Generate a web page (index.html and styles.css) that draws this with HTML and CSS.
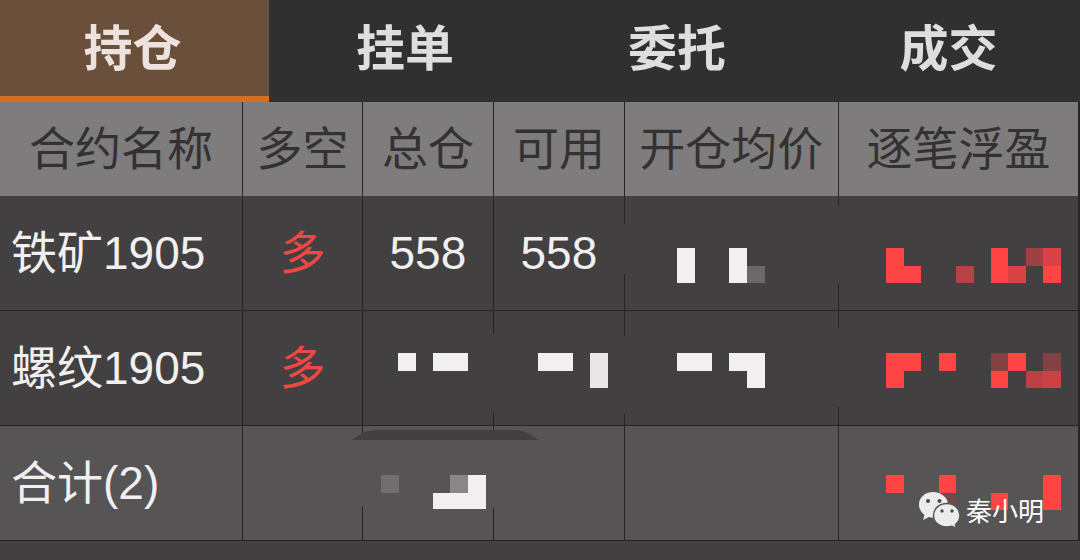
FILE: index.html
```html
<!DOCTYPE html>
<html lang="zh-CN">
<head>
<meta charset="utf-8">
<title>持仓</title>
<link rel="stylesheet" href="styles.css">
</head>
<body>
<nav class="tabs">
  <button class="tab tab-active" type="button">持仓</button>
  <button class="tab" type="button">挂单</button>
  <button class="tab" type="button">委托</button>
  <button class="tab tab-last" type="button">成交</button>
</nav>
<main class="board">
  <table class="positions">
    <colgroup>
      <col class="col-name"><col class="col-side"><col class="col-qty"><col class="col-qty"><col class="col-price"><col class="col-profit">
    </colgroup>
    <thead>
      <tr><th>合约名称</th><th>多空</th><th>总仓</th><th>可用</th><th>开仓均价</th><th>逐笔浮盈</th></tr>
    </thead>
    <tbody>
      <tr><td class="name">铁矿1905</td><td class="side">多</td><td>558</td><td>558</td><td></td><td></td></tr>
      <tr><td class="name">螺纹1905</td><td class="side">多</td><td></td><td></td><td></td><td></td></tr>
    </tbody>
    <tfoot>
      <tr><td class="name">合计(2)</td><td></td><td></td><td></td><td></td><td></td></tr>
    </tfoot>
  </table>
  <svg class="mosaic" viewBox="0 102 1080 439" preserveAspectRatio="none" aria-hidden="true">
    <!-- smudged stretches of the grid lines -->
    <g fill="#424041">
      <path d="M620 224h8v50h-8zM620 336h8v78h-8zM834 206h8v78h-8zM834 328h8v79h-8zM489 334h8v78h-8z"/>
    </g>
    <path fill="#565455" d="M358 433h8v73h-8zM489 436h8v72h-8z"/>
    <path fill="#424041" d="M352 440C358 436 364 430 377 430H515C526 430 532 436 539 440Z"/>
    <g fill="#f1eff0">
      <path d="M677 248h18v35h-18zM729 248h18v35h-18z"/>
      <path d="M398 353h18v18h-18zM433 353h35v18h-35zM538 353h35v18h-35z"/>
      <path d="M677 353h35v18h-35zM729 353h36v35h-18v-17h-18z"/>
      <path d="M468 475h18v34h-53v-16h35z"/>
    </g>
    <path fill="#e8e6e7" d="M590 353h18v35h-18z"/>
    <path fill="#6a6869" d="M747 266h18v17h-18z"/>
    <path fill="#706e6f" d="M381 475h18v18h-18z"/>
    <path fill="#888687" d="M450 475h18v18h-18z"/>
    <g fill="#ff4444">
      <path d="M886 248h18v18h17v17h-35zM991 248h17v35h-17zM1043 266h18v17h-18z"/>
      <path d="M886 353h35v18h-17v17h-18zM939 353h17v18h-17zM1008 353h18v18h-18zM991 371h17v17h-17z"/>
      <path d="M886 475h18v18h-18zM939 475h17v18h-17zM991 493h17v17h-17zM1043 475h18v35h-18z"/>
    </g>
    <path fill="#b74144" d="M956 266h18v17h-18z"/>
    <path fill="#d94345" d="M1008 266h18v17h-18zM1043 248h18v18h-18z"/>
    <path fill="#9f4044" d="M1026 248h17v18h-17z"/>
    <path fill="#834144" d="M991 353h17v18h-17zM1043 353h18v18h-18z"/>
    <path fill="#bd4144" d="M1026 371h17v17h-17z"/>
    <path fill="#cc4144" d="M1043 371h18v17h-18z"/>
    <path fill="#74494b" d="M939 493h17v17h-17z"/>
  </svg>
  <div class="signature">
    <svg class="wechat" viewBox="0 0 42 38" aria-hidden="true">
      <path fill="#ececee" d="M15 1C7 1 1 6.500 1 13.500C1 18 3.500 21.500 6.500 24L5 29L11 26C12.500 26.500 14 26.700 16 26.700C24 26.700 30 21 30 13.500C30 6.500 23 1 15 1Z"/>
      <path fill="#ececee" stroke="#565455" stroke-width="1.500" d="M29 12.500C21.500 12.500 15.500 17.500 15.500 24.500C15.500 31.500 21.500 36 29 36C31 36 32.500 35.700 34 35.200L38.500 37.500L37.500 33.500C40 31.500 42 28.500 42 24.500C42 17.500 36 12.500 29 12.500Z"/>
      <g fill="#4b494a"><circle cx="10" cy="10" r="2"/><circle cx="21.500" cy="10" r="2"/><circle cx="24" cy="20" r="1.700"/><circle cx="34" cy="20" r="1.700"/></g>
    </svg>
    <span>秦小明</span>
  </div>
</main>
</body>
</html>
```
FILE: styles.css
```css
* { box-sizing: border-box; }

body {
  margin: 0;
  min-height: 100vh;
  background: #424041;
  color: #f1eff0;
  font-family: "Liberation Sans", "Noto Sans CJK SC", sans-serif;
}

.tabs {
  display: grid;
  grid-template-columns: 269fr 272fr 272fr 267fr;
  height: 102px;
  background: #303030;
}

.tab {
  border: 0;
  padding: 0 0 12px;
  background: none;
  color: #dedede;
  font: 700 49px/72px "Noto Sans CJK SC", sans-serif;
}

.tab-active {
  background: #6a503a;
  border-bottom: 6px solid #d66e20;
  padding: 0 4px 6px 0;
  color: #eee2df;
}

.tab-last { padding-left: 4px; }

.board { position: relative; }

.positions {
  width: 100%;
  table-layout: fixed;
  border-collapse: separate;
  border-spacing: 0;
  font-size: 46px;
  line-height: 60px;
}

.col-name { width: 22.500%; }
.col-side { width: 11.100%; }
.col-qty { width: 12.130%; }
.col-price { width: 19.810%; }

.positions th,
.positions td {
  padding: 0;
  border-right: 1px solid #262425;
  text-align: center;
  font-weight: 400;
  white-space: nowrap;
}

.positions th {
  height: 94px;
  background: #7e7c7d;
  color: #333132;
}

.positions td {
  height: 115px;
  border-bottom: 1px solid #262425;
}

.positions th:last-child,
.positions td:last-child { border-right: 2px solid #262425; }

.positions tfoot td { background: #565455; }

.positions .name {
  padding-left: 11px;
  text-align: left;
}

.positions .side { color: #ee4845; }

.mosaic {
  position: absolute;
  inset: 0;
  width: 100%;
  height: 100%;
}

.signature {
  position: absolute;
  right: 36px;
  bottom: 12px;
  display: flex;
  align-items: center;
  gap: 6px;
  color: #ffffff;
  font: 26px/38px "Noto Sans CJK SC", sans-serif;
}

.wechat {
  width: 42px;
  height: 38px;
}
```
